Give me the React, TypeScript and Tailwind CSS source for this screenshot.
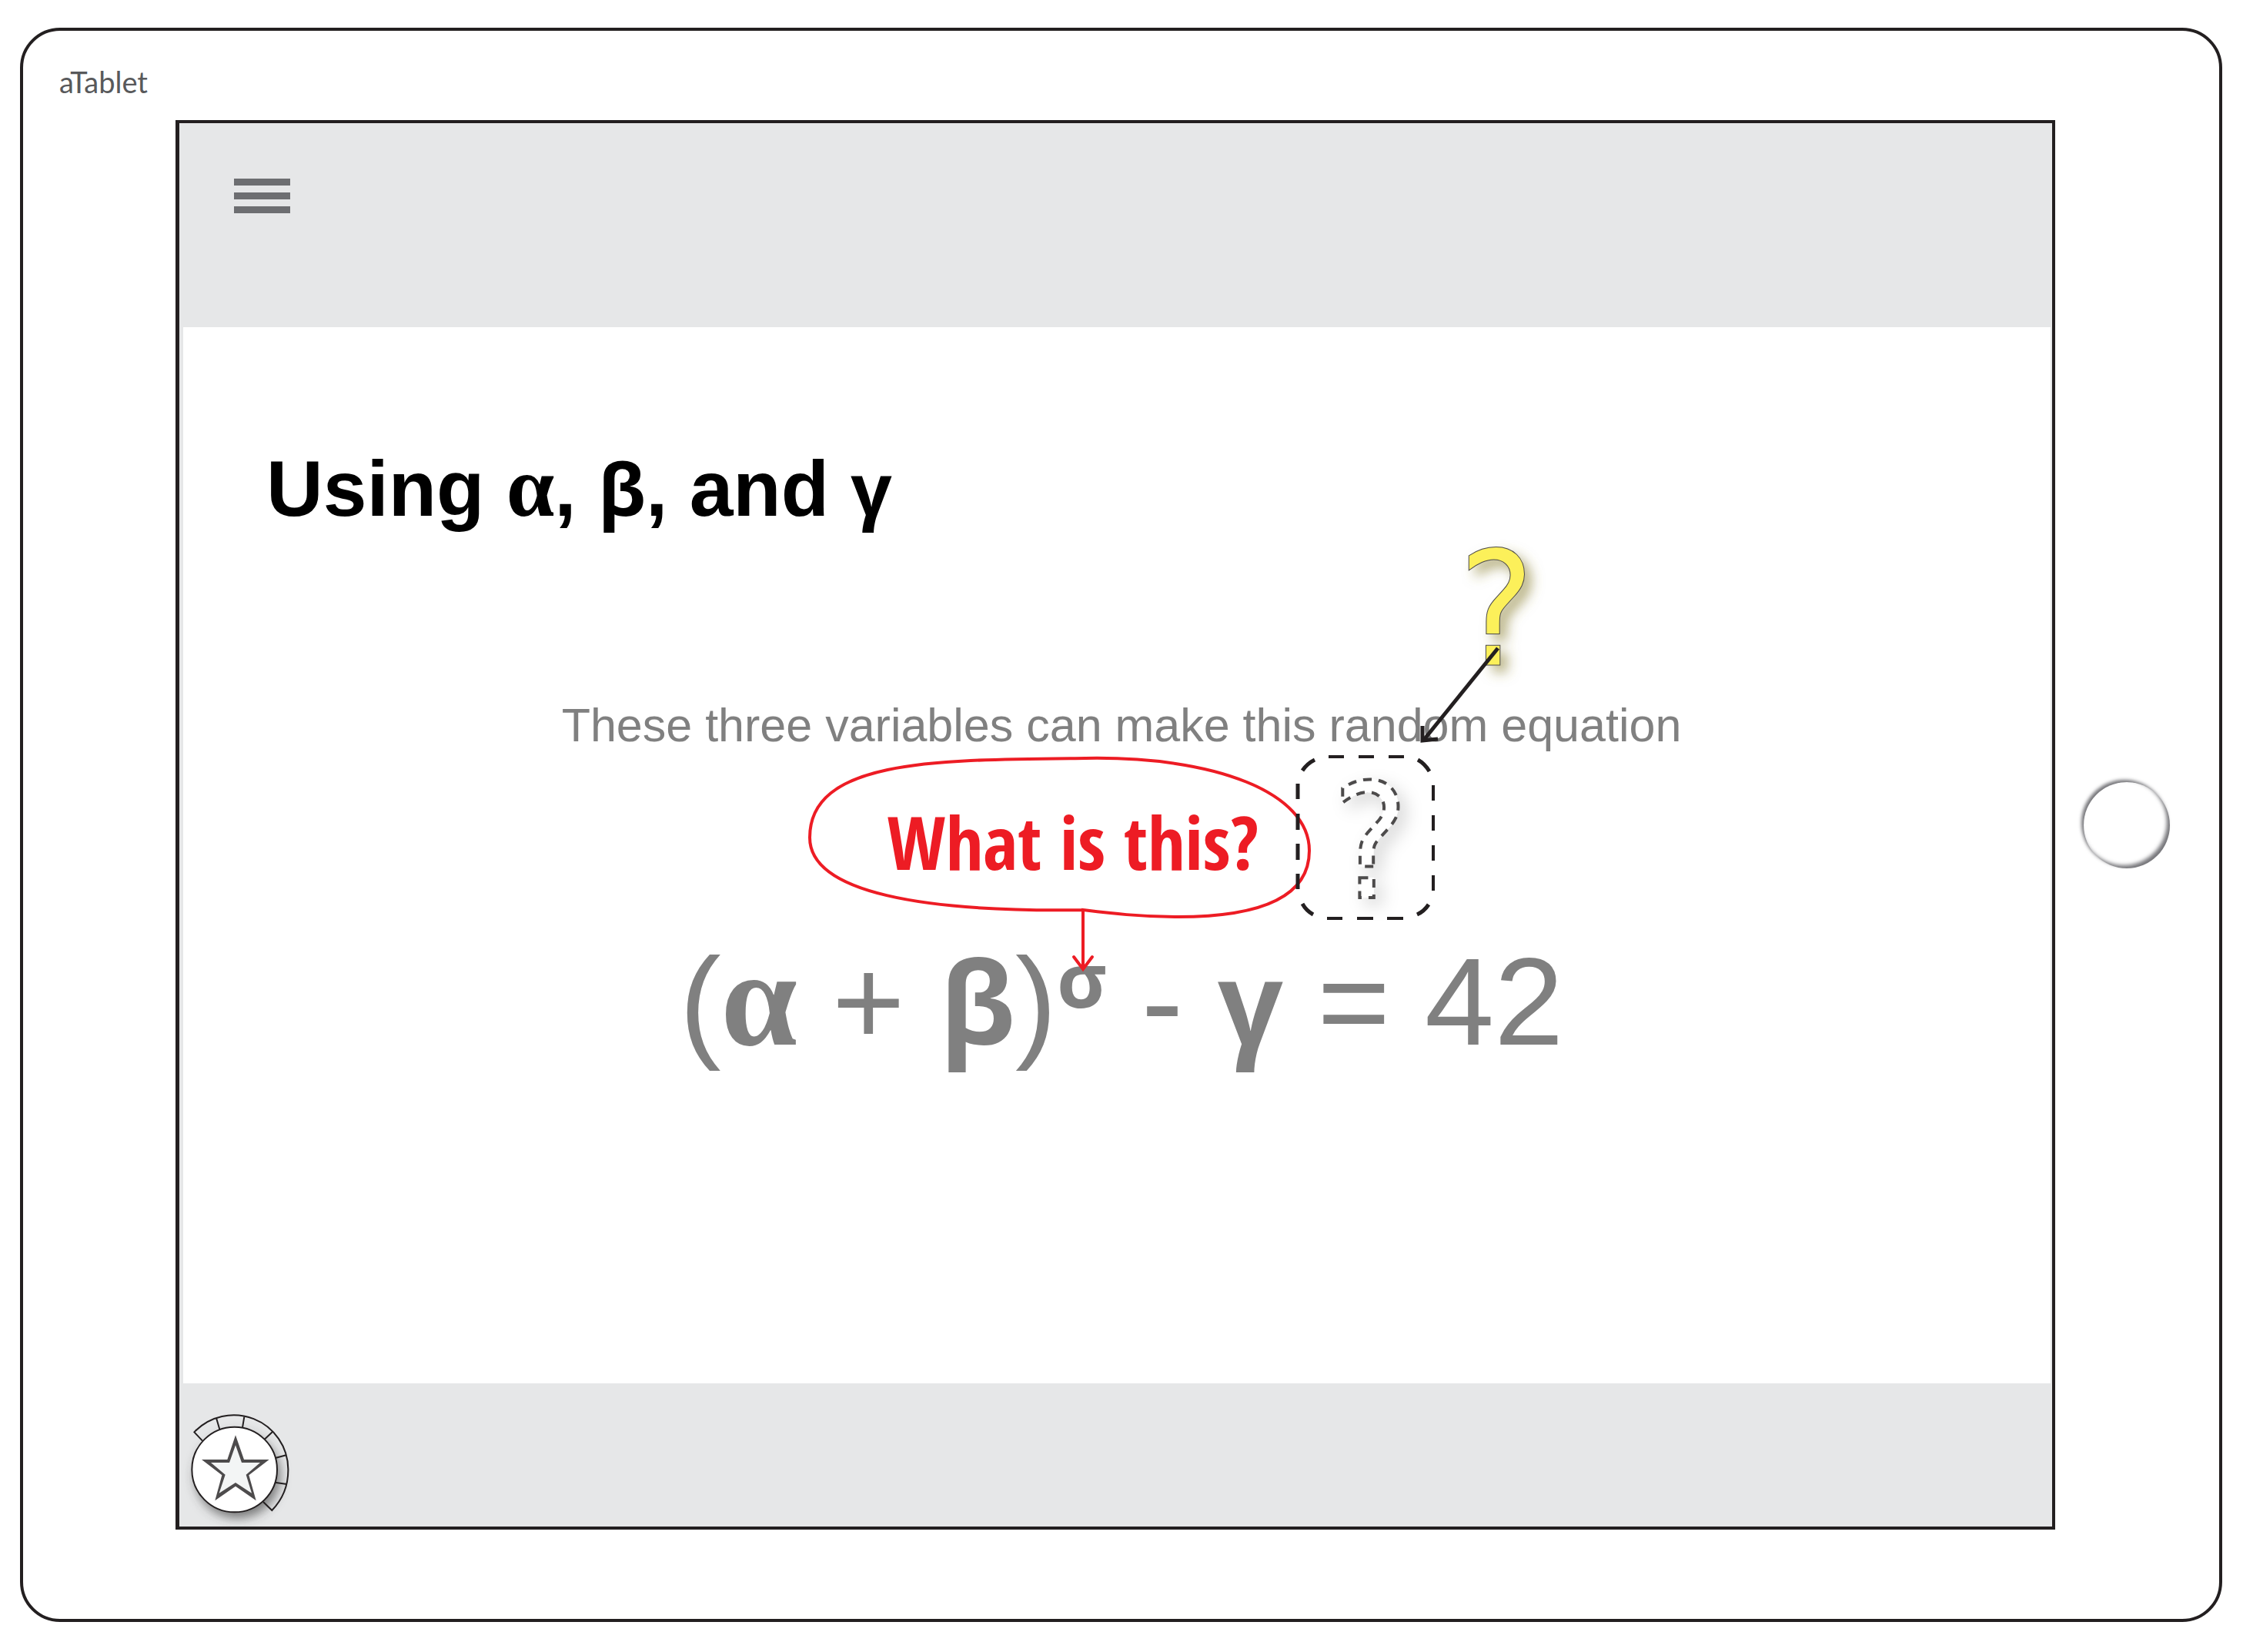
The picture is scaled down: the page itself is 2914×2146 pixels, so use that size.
type SymbolName = "α" | "β" | "γ" | "σ";

function Greek({ children }: { children: SymbolName }) {
  return children === "α" ? (
    <span className="font-['Liberation_Serif',serif] text-[1.1em] font-bold leading-[0]">{children}</span>
  ) : (
    <span className="font-['Open_Sans','Noto_Sans',sans-serif] text-[0.92em] font-bold leading-[0]">{children}</span>
  );
}

function StarDial() {
  return (
    <button type="button" aria-label="Favourites" className="ml-[7px] mt-[33px] block">
      <svg width="150" height="160" viewBox="60 180 450 480" className="overflow-visible" aria-hidden="true">
        <defs>
          <filter id="dial-shadow" x="-30%" y="-30%" width="170%" height="170%">
            <feDropShadow dx="12" dy="24" stdDeviation="20" floodColor="#3c403c" floodOpacity="0.65" />
          </filter>
        </defs>
        <circle cx="254" cy="417" r="166" fill="#fff" filter="url(#dial-shadow)" />
        <g fill="none" stroke="#231f20" strokeWidth="6">
          <path d="M129 305L97 271A212 212 0 0 1 463 415A226 226 0 0 1 400 576L366 543" />
          <path d="M183 216L196 260M292 211L285 254M402 270L371 299M455 361L416 371M458 474L411 467" />
        </g>
        <circle cx="254" cy="417" r="166" fill="#fff" stroke="#231f20" strokeWidth="6" />
        <path
          d="M258 283L291 378H389L310 439L338 538L258 482L178 538L205 439L126 378H226Z"
          fill="#4d4b4c"
        />
        <path
          d="M258 322L282 390H354L299 437L321 509L258 468L194 509L218 437L162 390H234Z"
          fill="#f3f5f5"
        />
      </svg>
    </button>
  );
}

function Annotations() {
  return (
    <svg
      width="1106"
      height="520"
      viewBox="898 690 1106 520"
      className="absolute left-1/2 top-[-212px] -translate-x-1/2 overflow-visible"
    >
      <defs>
        <filter id="yellow-shadow" x="-60%" y="-30%" width="250%" height="170%">
          <feDropShadow dx="9" dy="9" stdDeviation="8" floodColor="#8a8030" floodOpacity="0.6" />
        </filter>
        <filter id="ghost-shadow" x="-60%" y="-30%" width="250%" height="170%">
          <feDropShadow dx="9" dy="9" stdDeviation="11" floodColor="#000" floodOpacity="0.16" />
        </filter>
      </defs>

      <g fill="none" stroke="#ed1c24" strokeWidth="4">
        <path d="M1407 1182C1200 1185 1052 1160 1052 1088C1052 985 1220 987 1410 985C1580 982 1701 1030 1701 1105C1701 1165 1640 1191 1530 1191C1480 1191 1440 1186 1407 1182V1256" />
        <path d="M1395 1243L1407 1259L1419 1243" strokeLinecap="round" />
      </g>
      <text
        x="1394"
        y="1130"
        textAnchor="middle"
        fill="#ed1c24"
        className="font-['Open_Sans_Condensed','Roboto_Condensed','Liberation_Sans',sans-serif] text-[96px] font-bold"
      >
        What is this?
      </text>

      <g fill="none" stroke="#231f20" strokeWidth="4">
        <path d="M1726 983H1746M1765 983H1785M1804 983H1824" />
        <path d="M1724 1193H1744M1763 1193H1784M1802 1193H1823" />
        <path strokeWidth="5" d="M1686 1018V1038M1686 1057V1078M1686 1096V1117M1686 1135V1155" />
        <path d="M1862 1020V1040M1862 1059V1079M1862 1098V1118M1862 1137V1157" />
        <path
          strokeWidth="5"
          d="M1692 1001Q1698 992 1708 987M1842 987Q1851 992 1857 1002M1692 1174Q1697 1183 1706 1188M1841 1188Q1850 1184 1856 1175"
        />
      </g>

      <text
        x="1731"
        y="1166"
        fill="#fff"
        stroke="#4d4b4c"
        strokeWidth="4"
        strokeDasharray="11 9"
        filter="url(#ghost-shadow)"
        className="font-['DejaVu_Sans_Condensed','DejaVu_Sans',sans-serif] text-[206px]"
      >
        ?
      </text>
      <text
        x="1895"
        y="864"
        fill="#fcf05a"
        stroke="#4d4b4c"
        strokeWidth="1"
        filter="url(#yellow-shadow)"
        className="font-['DejaVu_Sans_Condensed','DejaVu_Sans',sans-serif] text-[206px]"
      >
        ?
      </text>
      <g fill="none" stroke="#231f20" strokeWidth="5">
        <path d="M1946 842L1849 962" />
        <path d="M1848 943V962L1868 960" />
      </g>
    </svg>
  );
}

export default function App() {
  return (
    <div className="flex min-h-screen bg-white pb-[39px] pl-[26px] pr-[27px] pt-[36px] font-['Liberation_Sans',sans-serif]">
      <div className="flex flex-1 flex-col rounded-[52px] border-4 border-[#231f20] pb-[116px]">
        <div className="flex h-[116px] items-center pl-[47px] pt-[16px]">
          <span className="font-['Lato','Open_Sans',sans-serif] text-[38px] leading-[48px] text-[#58595b]">aTablet</span>
        </div>
        <div className="flex flex-1 items-stretch">
          <main className="ml-[198px] flex flex-1 flex-col border-4 border-l-[5px] border-[#231f20] bg-[#e6e7e8]">
            <header className="h-[265px] pl-[71px] pt-[72px]">
              <button type="button" aria-label="Menu" className="flex w-[73px] flex-col gap-[9px]">
                <span className="h-[9px] w-full bg-[#6d6e71]" />
                <span className="h-[9px] w-full bg-[#6d6e71]" />
                <span className="h-[9px] w-full bg-[#6d6e71]" />
              </button>
            </header>
            <section className="ml-[5px] mr-[2px] flex-1 bg-white pt-[150px]">
              <h1 className="pl-[108px] text-[102px] font-bold leading-[120px] text-black">
                Using <Greek>α</Greek>, <Greek>β</Greek>, and <Greek>γ</Greek>
              </h1>
              <div className="relative mt-[207px] pl-[12px] text-center text-[#808080]">
                <p className="text-[61px] leading-[80px]">These three variables can make this random equation</p>
                <p className="mt-[239px] text-[162px] leading-[160px]">
                  (<Greek>α</Greek> + <Greek>β</Greek>)
                  <sup className="top-0 align-[48px] text-[108px] leading-[0]">
                    <Greek>σ</Greek>
                  </sup>{" "}
                  - <Greek>γ</Greek> = 42
                </p>
                <Annotations />
              </div>
            </section>
            <footer className="h-[186px]">
              <StarDial />
            </footer>
          </main>
          <div className="flex w-[213px] items-center pl-[37px]">
            <button
              type="button"
              aria-label="Home"
              className="size-[112px] rounded-full bg-white shadow-[-3px_-3px_4px_rgba(60,60,65,0.7),inset_-4px_-4px_5px_rgba(60,60,65,0.7)]"
            />
          </div>
        </div>
      </div>
    </div>
  );
}
